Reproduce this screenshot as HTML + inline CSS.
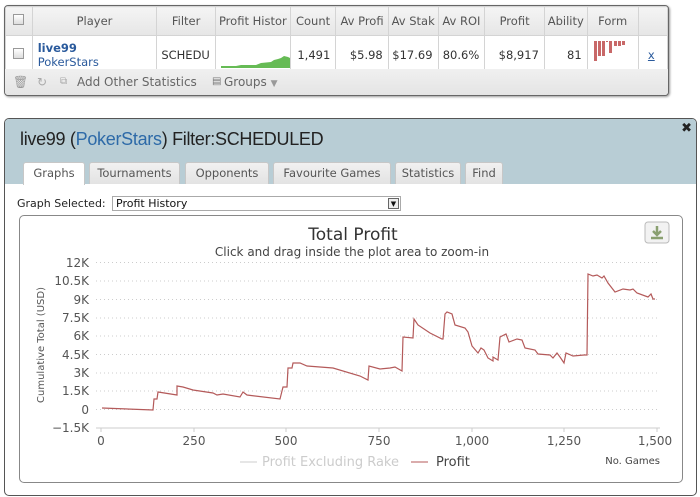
<!DOCTYPE html>
<html><head><style>
*{box-sizing:border-box;margin:0;padding:0}
body{width:700px;height:497px;background:#fff;font-family:"DejaVu Sans","Liberation Sans",sans-serif;position:relative;overflow:hidden;color:#333}
.a{position:absolute}
#tbl{left:4px;top:5px;width:665px;height:91px;border:1px solid #666;border-radius:4px;background:#eee;overflow:hidden;box-shadow:1px 1px 2px #999}
table{border-collapse:collapse;font-size:11.5px;position:absolute;left:0;top:0}
td{border:1px solid #d4d4d4;padding:0 2px;white-space:nowrap;overflow:hidden}
tr.h td{height:29px;background:linear-gradient(#f4f4f4,#e6e6e6);color:#555;text-align:center}
tr.d td{height:34px;background:#fff;text-align:right;padding-right:5px}
.cb{display:inline-block;width:11px;height:11px;border:1px solid #999;background:linear-gradient(#fff,#ddd)}
#dlg{left:4px;top:118px;width:693px;height:378px;border:1px solid #555;border-radius:5px;background:#fff;overflow:hidden}
#hd{left:0;top:0;width:693px;height:65px;background:#b8cdd5}
.tab{position:absolute;top:43px;height:22px;border:1px solid #c7c7c7;border-bottom:none;background:linear-gradient(#f1f1f1,#e3e3e3);font-size:11.5px;color:#555;text-align:center;line-height:21px;border-radius:3px 3px 0 0}
</style></head><body>
<div id="tbl" class="a">
<table>
<tr class="h"><td style="width:28px"><span class="cb"></span></td><td style="width:131px">Player</td><td style="width:50px">Filter</td><td style="width:74px">Profit Histor</td><td style="width:46px">Count</td><td style="width:53px">Av Profi</td><td style="width:50px">Av Stak</td><td style="width:47px">Av ROI</td><td style="width:61px">Profit</td><td style="width:43px">Ability</td><td style="width:50px">Form</td><td style="width:31px"></td></tr>
<tr class="d"><td style="text-align:center;padding:0"><span class="cb"></span></td><td style="text-align:left;padding-left:5px;line-height:14px"><b style="color:#2a5a9c">live99</b><br><span style="color:#2a5a9c">PokerStars</span></td><td style="text-align:left;padding-left:4px">SCHEDU</td><td style="padding:0"><svg width="74" height="34"><path d="M5 30 L20 30 L25 29 L40 29 L45 27 L55 26 L58 24 L62 23 L65 22 L68 20 L72 21 L74 22 L74 32 L5 32Z" fill="#66bb55"/></svg></td><td>1,491</td><td>$5.98</td><td>$17.69</td><td>80.6%</td><td>$8,917</td><td>81</td><td style="padding:0;text-align:left"><svg width="50" height="34"><g fill="#c86868"><rect x="6" y="5" width="3" height="20"/><rect x="10" y="5" width="3" height="15"/><rect x="14" y="5" width="3" height="15"/><rect x="18" y="5" width="2" height="1"/><rect x="21" y="5" width="3" height="12"/><rect x="26" y="5" width="3" height="5"/><rect x="30" y="5" width="3" height="5"/><rect x="34" y="5" width="3" height="4"/></g></svg></td><td style="text-align:center"><u style="color:#2a5a9c">x</u></td></tr>
</table>
<div class="a" style="left:0;top:63px;width:665px;height:27px;background:linear-gradient(#f0f0f0,#e4e4e4);font-size:12px;color:#666;line-height:26px">
<span class="a" style="left:8px;color:#999">🗑</span><span class="a" style="left:32px;color:#aaa">↻</span><span class="a" style="left:55px;color:#aaa;font-size:10px">⧉</span><span class="a" style="left:72px">Add Other Statistics</span><span class="a" style="left:207px;color:#777;font-size:10px">▤</span><span class="a" style="left:219px">Groups <span style="font-size:9px;color:#999">▼</span></span></div>
</div>
<div id="dlg" class="a">
<div id="hd" class="a"></div>
<div class="a" style="left:15px;top:10px;font-family:'Liberation Sans',sans-serif;font-size:18px;color:#222;letter-spacing:-0.3px">live99 (<span style="color:#2d6aa8">PokerStars</span>) Filter:SCHEDULED</div>
<div class="a" style="right:4px;top:2px;font-size:13px;font-weight:bold;color:#222">✖</div>
<div class="tab" style="left:18px;width:62px;background:#fff;height:23px">Graphs</div>
<div class="tab" style="left:84px;width:91px">Tournaments</div>
<div class="tab" style="left:180px;width:84px">Opponents</div>
<div class="tab" style="left:268px;width:118px">Favourite Games</div>
<div class="tab" style="left:390px;width:66px">Statistics</div>
<div class="tab" style="left:460px;width:38px">Find</div>
<div class="a" style="left:12px;top:78px;font-size:11px;color:#222">Graph Selected:</div>
<div class="a" style="left:107px;top:77px;width:289px;height:15px;border:1px solid #aaa;font-size:11px;padding-left:3px;line-height:13px;color:#111">Profit History<span class="a" style="right:1px;top:1px;width:11px;height:11px;border:1px solid #666;font-size:7px;text-align:center;line-height:10px;background:#eee">▼</span></div>
<div class="a" style="left:14px;top:96px;width:664px;height:268px;border:1px solid #888;border-radius:5px"></div>
</div>
<svg class="a" style="left:0;top:0" width="700" height="497">
<text x="353" y="240" text-anchor="middle" font-family="DejaVu Sans" font-size="17" fill="#333">Total Profit</text>
<text x="352" y="256" text-anchor="middle" font-family="DejaVu Sans" font-size="12" fill="#444">Click and drag inside the plot area to zoom-in</text>
<rect x="645" y="222" width="24" height="21" rx="3" fill="#f2f2f2" stroke="#bbb"/>
<path d="M657 226 v9 M653 231 l4 4 4 -4 M651 238 h12" stroke="#8aa070" stroke-width="2.5" fill="none"/>
<g stroke="#ccc" stroke-dasharray="1 3">
<line x1="96" x2="660" y1="262.5" y2="262.5"/><line x1="96" x2="660" y1="281" y2="281"/><line x1="96" x2="660" y1="299.5" y2="299.5"/><line x1="96" x2="660" y1="318" y2="318"/><line x1="96" x2="660" y1="336" y2="336"/><line x1="96" x2="660" y1="354.5" y2="354.5"/><line x1="96" x2="660" y1="373" y2="373"/><line x1="96" x2="660" y1="391" y2="391"/><line x1="96" x2="660" y1="409.5" y2="409.5"/></g>
<line x1="96" x2="660" y1="428" y2="428" stroke="#ccc"/>
<g stroke="#ccc"><line x1="101" x2="101" y1="428" y2="432"/><line x1="194" x2="194" y1="428" y2="432"/><line x1="286" x2="286" y1="428" y2="432"/><line x1="379" x2="379" y1="428" y2="432"/><line x1="472" x2="472" y1="428" y2="432"/><line x1="564" x2="564" y1="428" y2="432"/><line x1="657" x2="657" y1="428" y2="432"/></g>
<g font-family="DejaVu Sans" font-size="12" fill="#555" text-anchor="end">
<text x="89" y="267">12K</text><text x="89" y="285">10.5K</text><text x="89" y="304">9K</text><text x="89" y="322">7.5K</text><text x="89" y="340">6K</text><text x="89" y="359">4.5K</text><text x="89" y="377">3K</text><text x="89" y="395">1.5K</text><text x="89" y="414">0</text><text x="89" y="432">−1.5K</text></g>
<g font-family="DejaVu Sans" font-size="12" fill="#555" text-anchor="middle">
<text x="101" y="445">0</text><text x="194" y="445">250</text><text x="286" y="445">500</text><text x="379" y="445">750</text><text x="472" y="445">1,000</text><text x="564" y="445">1,250</text><text x="655" y="445">1,500</text></g>
<text transform="translate(44,345) rotate(-90)" text-anchor="middle" font-family="DejaVu Sans" font-size="10" fill="#555">Cumulative Total (USD)</text>
<path fill="none" stroke="#b45a5a" stroke-width="1.2" d="M102 408 L153 410 L154 399 L157 399 L158 392 L177 395 L177 386 L183 387 L193 390 L213 393 L217 395 L223 394 L240 397 L243 392 L247 395 L280 399 L283 387 L287 387 L288 368 L292 368 L293 363 L300 363 L307 366 L320 367 L333 368 L360 376 L368 380 L369 366 L380 369 L390 368 L395 367 L402 371 L403 337 L413 338 L414 319 L418 325 L430 333 L442 339 L443 339 L445 314 L447 312 L452 314 L455 325 L465 328 L468 332 L472 346 L478 353 L481 348 L484 350 L488 358 L493 361 L493 357 L498 360 L500 337 L506 334 L509 342 L517 339 L522 340 L525 348 L535 350 L538 354 L550 355 L553 358 L557 353 L560 357 L564 363 L566 353 L573 356 L584 355 L587 355 L588 274 L593 276 L597 275 L602 278 L604 276 L608 283 L615 292 L623 289 L630 290 L633 289 L637 293 L648 297 L651 294 L653 299 L655 299"/>
<line x1="240" x2="257" y1="462" y2="462" stroke="#ccc"/>
<text x="262" y="466" font-family="DejaVu Sans" font-size="13" fill="#ccc">Profit Excluding Rake</text>
<line x1="411" x2="428" y1="462" y2="462" stroke="#b45a5a"/>
<text x="436" y="466" font-family="DejaVu Sans" font-size="13" fill="#444">Profit</text>
<text x="660" y="464" text-anchor="end" font-family="DejaVu Sans" font-size="10" fill="#444">No. Games</text>
</svg>
</body></html>
